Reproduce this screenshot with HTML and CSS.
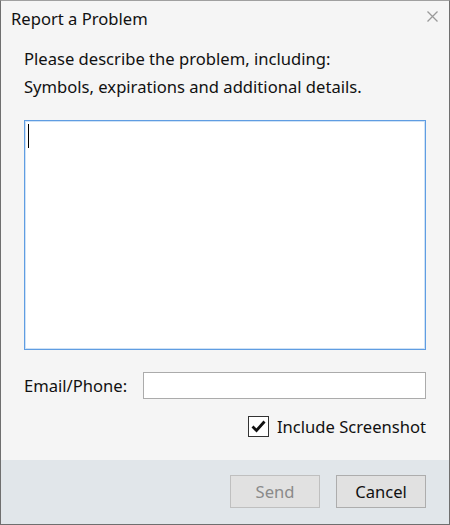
FILE: index.html
```html
<!DOCTYPE html>
<html>
<head>
<meta charset="utf-8">
<link rel="stylesheet" href="styles.css">
</head>
<body>
<div class="window">
  <div class="titlebar">
    <span class="title">Report a Problem</span>
    <span class="close">
      <svg width="11" height="11" viewBox="0 0 11 11"><path d="M0.5 0.5 L10.5 10.5 M10.5 0.5 L0.5 10.5" stroke="#9a9a9a" stroke-width="1.3" fill="none"/></svg>
    </span>
  </div>
  <div class="content">
    <p class="intro">Please describe the problem, including:<br>Symbols, expirations and additional details.</p>
    <div class="textarea"><span class="caret"></span></div>
    <div class="row email">
      <label class="label">Email/Phone:</label>
      <div class="input"></div>
    </div>
    <div class="row check">
      <span class="checkbox">
        <svg width="15" height="13" viewBox="0 0 15 13"><path d="M1.5 6.5 L5.5 10.5 L13.5 1.5" stroke="#111" stroke-width="2.8" fill="none"/></svg>
      </span>
      <span class="check-label">Include Screenshot</span>
    </div>
  </div>
  <div class="footer">
    <button class="btn disabled">Send</button>
    <button class="btn">Cancel</button>
  </div>
</div>
</body>
</html>
```
FILE: styles.css
```css
html, body { margin: 0; padding: 0; }
body { width: 450px; height: 525px; overflow: hidden; font-family: "Noto Sans", "Open Sans", sans-serif; color: #111; }
.window {
  box-sizing: border-box; width: 450px; height: 525px;
  border: 1px solid #6f6f6f; border-top-color: #a0a0a0;
  background: #f5f5f5; display: flex; flex-direction: column;
}
.titlebar { height: 34px; display: flex; align-items: center; justify-content: space-between; padding: 0 11px 0 10px; }
.title { font-size: 16.6px; }
.close { display: flex; margin-top: -4px; }
.content { flex: 1; padding: 0 23px; display: flex; flex-direction: column; }
.intro { margin: 10px 0 0; font-size: 16.6px; line-height: 28px; }
.textarea {
  box-sizing: border-box;
  margin-top: 19px; height: 230px; background: #fff;
  border: 1px solid #5f9de2; box-shadow: inset 0 0 0 1px #cfe2f6; position: relative;
}
.caret { position: absolute; left: 3px; top: 3px; width: 1px; height: 24px; background: #000; }
.row { display: flex; align-items: center; }
.email { margin-top: 22px; }
.label { font-size: 16.6px; width: 119px; }
.input { box-sizing: border-box; flex: 1; height: 27px; background: #fff; border: 1px solid #ababab; }
.check { justify-content: flex-end; margin-top: 16px; }
.checkbox { box-sizing: border-box; width: 21px; height: 21px; border: 1px solid #333; background: #fff; display: flex; align-items: center; justify-content: center; margin-right: 8px; }
.check-label { font-size: 16.6px; }
.footer { height: 64px; background: #e1e6ea; display: flex; justify-content: flex-end; align-items: flex-start; padding: 15px 23px 0; box-sizing: border-box; gap: 16px; }
.btn { box-sizing: border-box; width: 90px; height: 33px; border: 1px solid #adadad; background: #e1e1e1; font-family: inherit; font-size: 16.6px; color: #111; padding: 0; }
.btn.disabled { color: #8a8a8a; border-color: #bfbfbf; }
```
